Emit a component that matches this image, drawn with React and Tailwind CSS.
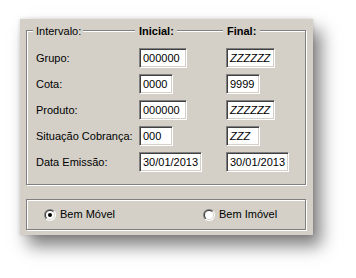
import React from "react";

const rows = [
  { label: "Grupo:", ini: "000000", fim: "ZZZZZZ", w: "w-[48px]", w2: "w-[49px]" },
  { label: "Cota:", ini: "0000", fim: "9999", w: "w-[34px]", w2: "w-[34px]" },
  { label: "Produto:", ini: "000000", fim: "ZZZZZZ", w: "w-[48px]", w2: "w-[49px]" },
  { label: "Situação Cobrança:", ini: "000", fim: "ZZZ", w: "w-[34px]", w2: "w-[34px]" },
  { label: "Data Emissão:", ini: "30/01/2013", fim: "30/01/2013", w: "w-[63px]", w2: "w-[63px]" },
];

const Field = ({ value, className }) => (
  <div
    className={`h-[20px] bg-white border border-t-[#808080] border-l-[#808080] border-b-white border-r-white shadow-[inset_1px_1px_0_#404040,inset_-1px_-1px_0_#d4d0c8] pl-[3px] leading-[18px] whitespace-nowrap overflow-hidden ${className} ${/Z/.test(value) ? "italic" : ""}`}
  >
    {value}
  </div>
);

const Radio = ({ id, checked }) => (
  <svg width="12" height="12" viewBox="0 0 12 12">
    <defs>
      <linearGradient id={`o${id}`} x1="0" y1="0" x2="1" y2="1">
        <stop offset="0.5" stopColor="#808080" />
        <stop offset="0.5" stopColor="#ffffff" />
      </linearGradient>
      <linearGradient id={`i${id}`} x1="0" y1="0" x2="1" y2="1">
        <stop offset="0.5" stopColor="#404040" />
        <stop offset="0.5" stopColor="#d4d0c8" />
      </linearGradient>
    </defs>
    <circle cx="6" cy="6" r="6" fill={`url(#o${id})`} />
    <circle cx="6" cy="6" r="5" fill={`url(#i${id})`} />
    <circle cx="6" cy="6" r="4" fill="#fff" />
    {checked && <circle cx="6" cy="6" r="2" fill="#000" />}
  </svg>
);

export default function App() {
  return (
    <div className="w-[356px] h-[278px] bg-white pt-[19px] pl-[20px] font-['Liberation_Sans',Arial,sans-serif] text-[11px] text-black">
      <div className="w-[293px] h-[216px] bg-[#d4d0c8] px-[6px] pt-[11px] shadow-[8px_11px_16px_rgba(0,0,0,0.5),0_0_4px_rgba(0,0,0,0.15)]">
        {/* Intervalo */}
        <div className="w-[280px] h-[155px] border border-[#808080] shadow-[inset_1px_1px_0_#fff,1px_1px_0_#fff]">
          <div className="grid grid-cols-[112px_87px_1fr] h-[13px] leading-[13px] -mt-[6px]">
            <div>
              <span className="ml-[6px] pl-[3px] pr-[2px] bg-[#d4d0c8]">Intervalo:</span>
            </div>
            <div>
              <span className="-ml-[4px] pl-[4px] pr-[3px] bg-[#d4d0c8] font-bold">Inicial:</span>
            </div>
            <div>
              <span className="-ml-[3px] pl-[4px] pr-[4px] bg-[#d4d0c8] font-bold">Final:</span>
            </div>
          </div>
          <div className="mt-[10px] flex flex-col gap-[6px]">
            {rows.map((r) => (
              <div key={r.label} className="grid grid-cols-[112px_87px_1fr] items-center">
                <span className="pl-[9px]">{r.label}</span>
                <Field value={r.ini} className={r.w} />
                <Field value={r.fim} className={r.w2} />
              </div>
            ))}
          </div>
        </div>

        {/* Tipo de bem */}
        <div className="mt-[14px] w-[280px] h-[31px] border border-[#808080] shadow-[inset_1px_1px_0_#fff,1px_1px_0_#fff] flex items-center">
          <div className="flex items-center gap-[4px] pl-[17px] w-[176px]">
            <Radio id="a" checked />
            <span>Bem Móvel</span>
          </div>
          <div className="flex items-center gap-[4px]">
            <Radio id="b" />
            <span>Bem Imóvel</span>
          </div>
        </div>
      </div>
    </div>
  );
}
